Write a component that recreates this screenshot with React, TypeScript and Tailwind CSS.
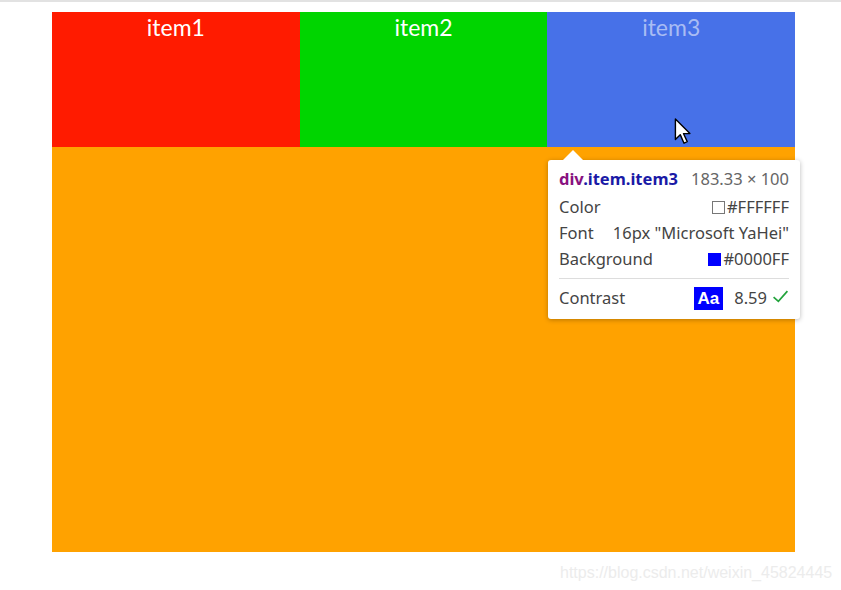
import React from "react";

export default function App() {
  return (
    <div className="relative w-[841px] h-[590px] bg-white overflow-hidden border-t-2 border-[#e2e2e2]" style={{ fontFamily: "Lato, 'Noto Sans', sans-serif" }}>
      <div className="ml-[52px] mt-[10px] w-[743px]">
        <div className="flex h-[135px] text-white text-[23px] leading-none">
          <div className="flex-1 bg-[#ff1b00] flex justify-center pt-[4px]">item1</div>
          <div className="flex-1 bg-[#00d500] flex justify-center pt-[4px]">item2</div>
          <div className="flex-1 bg-[#4771e8] flex justify-center pt-[4px] text-[#a9bcf3]">item3</div>
        </div>
        <div className="h-[405px] bg-[#ffa200]" />
      </div>

      <div className="absolute left-[560px] top-[559px] text-[16px] text-[#ececec]" style={{ fontFamily: "'Liberation Sans', Arial, sans-serif" }}>
        https://blog.csdn.net/weixin_45824445
      </div>

      {/* cursor */}
      <svg className="absolute left-[674px] top-[116px]" width="20" height="29" viewBox="0 0 18 27">
        <path d="M1 1 L1 20 L5.5 15.5 L9 23.5 L12 22 L8.5 14.5 L14.5 14.5 Z" fill="white" stroke="black" strokeWidth="1.3" strokeLinejoin="round" />
      </svg>

      {/* tooltip */}
      <div className="absolute left-[548px] top-[158px] w-[252px] h-[159px] bg-white rounded-[3px] shadow-[0_1px_5px_rgba(0,0,0,0.28)] px-[11px] pt-[7px] text-[16.5px] text-[#444]" style={{ fontFamily: "'Noto Sans', 'Open Sans', sans-serif" }}>
        <div className="absolute -top-[10px] left-[15px] w-0 h-0 border-l-[10px] border-r-[10px] border-b-[10px] border-l-transparent border-r-transparent border-b-white" />
        <div className="flex justify-between items-center h-[24px]">
          <span className="font-bold"><span className="text-[#881280]">div</span><span className="text-[#1a1aa6]">.item.item3</span></span>
          <span className="text-[#666]">183.33 × 100</span>
        </div>
        <div className="flex justify-between items-center h-[26px] mt-[3px]">
          <span>Color</span>
          <span className="flex items-center gap-[2px]"><span className="inline-block w-[13px] h-[13px] border border-[#777] bg-white" />#FFFFFF</span>
        </div>
        <div className="flex justify-between items-center h-[26px]">
          <span>Font</span>
          <span>16px "Microsoft YaHei"</span>
        </div>
        <div className="flex justify-between items-center h-[26px]">
          <span>Background</span>
          <span className="flex items-center gap-[2px]"><span className="inline-block w-[13px] h-[13px] bg-[#0000ff]" />#0000FF</span>
        </div>
        <div className="border-t border-[#ddd] mt-[6px]" />
        <div className="flex justify-between items-center h-[38px]">
          <span>Contrast</span>
          <span className="flex items-center">
            <span className="bg-[#0000ff] text-white font-bold text-[17px] leading-none px-[4px] py-[3px] mr-[11px]" style={{ fontFamily: "'Liberation Sans', Arial, sans-serif" }}>Aa</span>
            <span>8.59</span>
            <svg width="17" height="15" viewBox="0 0 16 14" className="ml-[5px] -mt-[3px]"><path d="M1.5 7.5 L6 11.5 L14.5 2" fill="none" stroke="#22a33c" strokeWidth="1.6" /></svg>
          </span>
        </div>
      </div>
    </div>
  );
}
